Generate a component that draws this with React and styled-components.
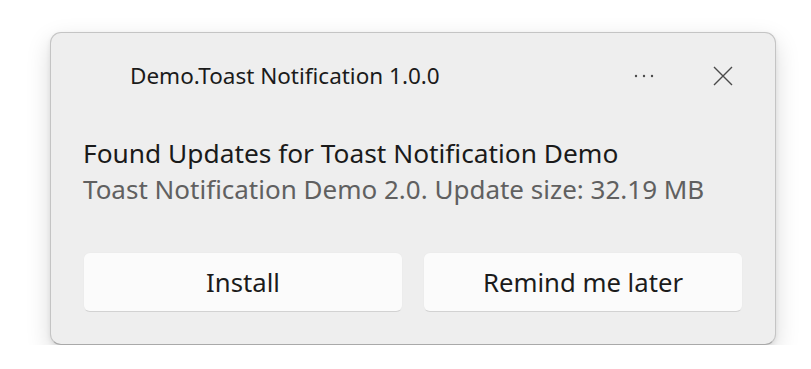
import React from 'react';
import styled, { createGlobalStyle } from 'styled-components';

const GlobalStyle = createGlobalStyle`
  html, body {
    margin: 0;
    padding: 0;
    background: #ffffff;
  }
  body {
    font-family: 'Noto Sans', 'Open Sans', sans-serif;
    -webkit-font-smoothing: antialiased;
  }
`;

const Page = styled.div`
  padding: 32px 0 0 50px;
`;

const Toast = styled.div`
  box-sizing: border-box;
  width: 726px;
  height: 313px;
  background: #eeeeee;
  border: 1px solid #c4c4c4;
  border-bottom-color: #a9a9a9;
  border-radius: 11px;
  box-shadow: 0 9px 24px rgba(0, 0, 0, 0.15), 0 2px 5px rgba(0, 0, 0, 0.08);
  padding: 28px 32px 32px 32px;
  display: flex;
  flex-direction: column;
`;

const Header = styled.div`
  height: 30px;
  margin-bottom: 44px;
  display: flex;
  align-items: center;
  padding-left: 47px;
`;

const AppName = styled.div`
  flex: 1;
  font-size: 22.5px;
  line-height: 30px;
  color: #1b1b1b;
`;

const IconButton = styled.button`
  border: none;
  background: transparent;
  padding: 0;
  width: ${p => p.$w}px;
  height: 30px;
  margin-left: ${p => p.$gap || 0}px;
  display: flex;
  align-items: center;
  justify-content: center;
  color: #4a4a4a;
  cursor: pointer;
`;

const Body = styled.div`
  display: flex;
  flex-direction: column;
  flex: 1;
`;

const Title = styled.div`
  font-size: 26.3px;
  line-height: 36px;
  color: #1a1a1a;
`;

const Subtitle = styled.div`
  font-size: 26px;
  line-height: 36px;
  color: #606060;
`;

const Actions = styled.div`
  display: flex;
  gap: 20px;
  margin-top: auto;
`;

const ActionButton = styled.button`
  flex: 1;
  height: 60px;
  box-sizing: border-box;
  background: #fbfbfb;
  border: 1px solid #ececec;
  border-bottom-color: #d2d2d2;
  border-radius: 7px;
  font-family: inherit;
  font-size: 25.7px;
  color: #1b1b1b;
  cursor: pointer;
`;

const MoreIcon = () => (
  <svg width="24" height="6" viewBox="0 0 24 6">
    <circle cx="4" cy="3" r="1.2" fill="currentColor" />
    <circle cx="12" cy="3" r="1.2" fill="currentColor" />
    <circle cx="20" cy="3" r="1.2" fill="currentColor" />
  </svg>
);

const CloseIcon = () => (
  <svg width="20" height="20" viewBox="0 0 20 20">
    <path d="M1 1 L19 19 M19 1 L1 19" stroke="currentColor" strokeWidth="1.4" fill="none" />
  </svg>
);

export default function App() {
  return (
    <Page>
      <GlobalStyle />
      <Toast>
        <Header>
          <AppName>Demo.Toast Notification 1.0.0</AppName>
          <IconButton $w={60} aria-label="More options"><MoreIcon /></IconButton>
          <IconButton $w={40} $gap={29} aria-label="Close"><CloseIcon /></IconButton>
        </Header>
        <Body>
          <Title>Found Updates for Toast Notification Demo</Title>
          <Subtitle>Toast Notification Demo 2.0. Update size: 32.19 MB</Subtitle>
          <Actions>
            <ActionButton>Install</ActionButton>
            <ActionButton>Remind me later</ActionButton>
          </Actions>
        </Body>
      </Toast>
    </Page>
  );
}
